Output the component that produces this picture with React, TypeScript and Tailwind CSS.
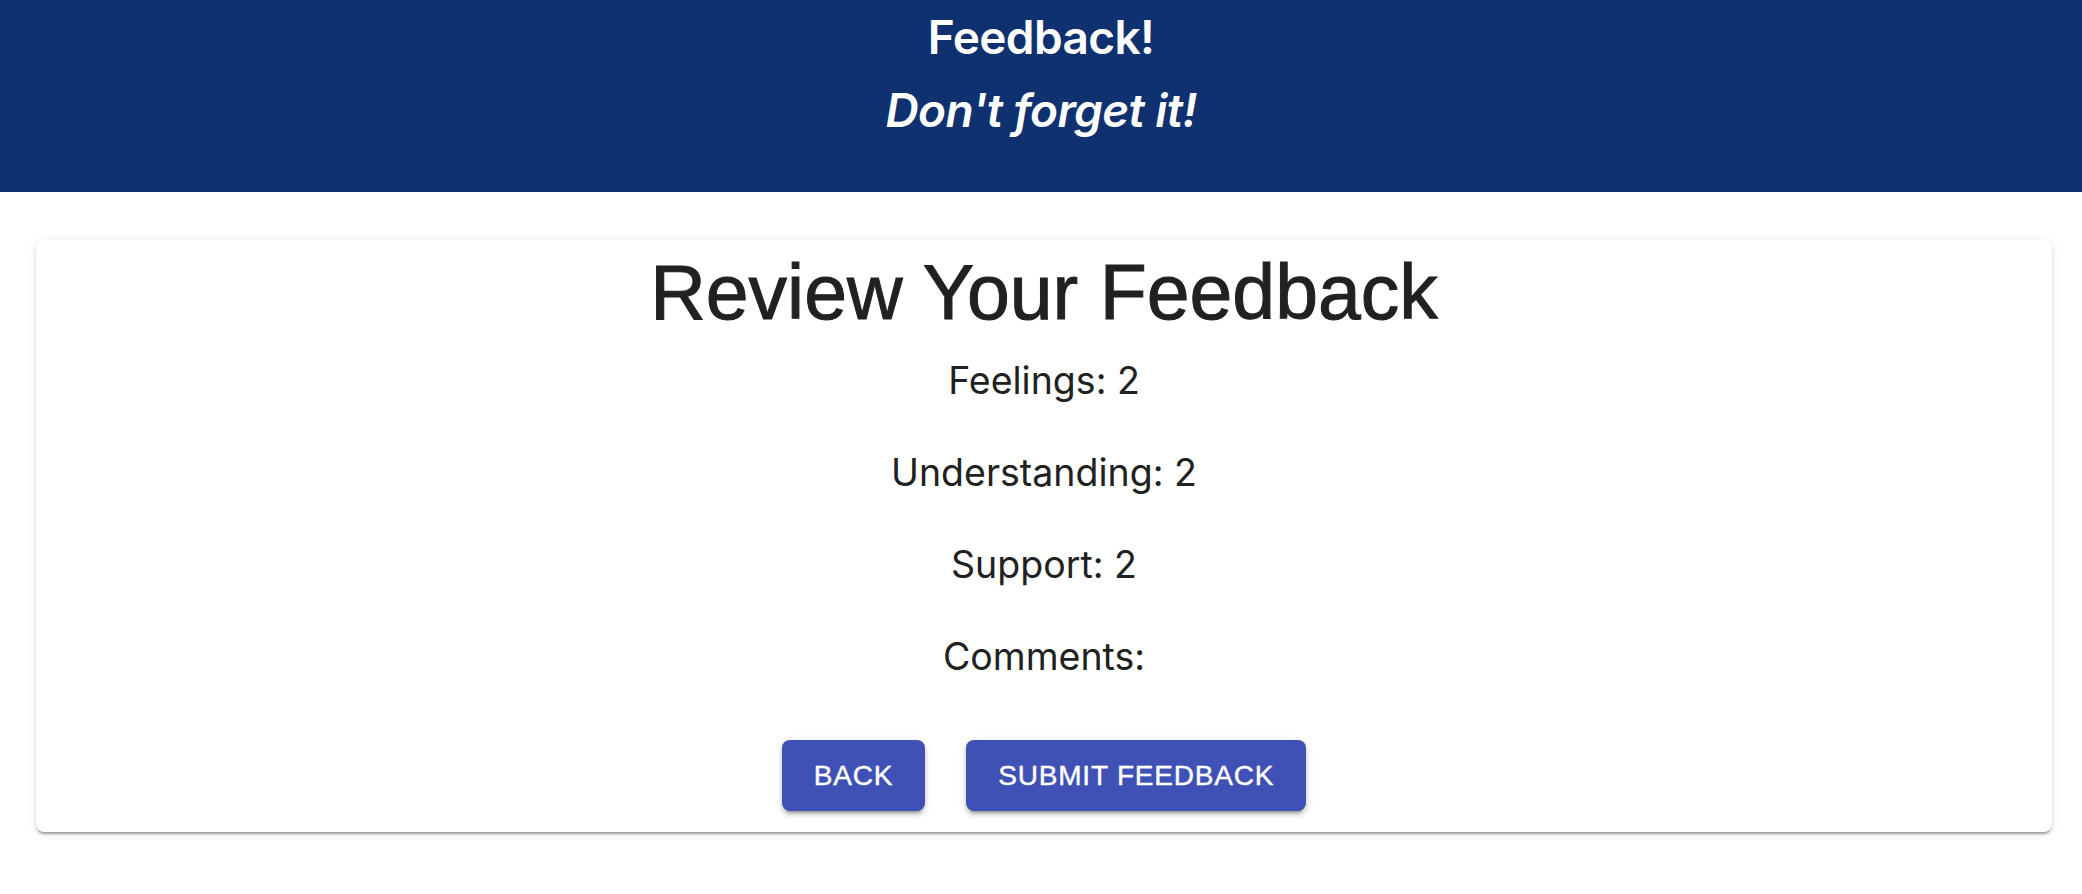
export default function App() {
  const answers = [
    { label: "Feelings", value: "2" },
    { label: "Understanding", value: "2" },
    { label: "Support", value: "2" },
    { label: "Comments", value: "" },
  ];

  return (
    <div className="min-h-screen bg-white">
      <header className="h-[192px] bg-[#10316f] pt-[9px] text-center text-white font-['Inter',sans-serif] font-semibold tracking-[-0.6px]">
        <h1 className="text-[46px] leading-[56px]">Feedback!</h1>
        <h4 className="mt-[17px] text-[46px] leading-[56px] italic">
          Don't forget it!
        </h4>
      </header>

      <main className="pl-[36px] pr-[30px] pt-[48px]">
        <div className="rounded-[8px] bg-white pt-[9px] pb-[21px] text-center shadow-[0_4px_2px_-2px_rgba(0,0,0,0.2),0_2px_2px_0_rgba(0,0,0,0.14),0_2px_8px_0_rgba(0,0,0,0.12)]">
          <h2 className="text-[77px] leading-[86px] text-[#212121] font-['Liberation_Sans',Arial,sans-serif] [-webkit-text-stroke:1px_#212121]">
            Review Your Feedback
          </h2>

          <div className="mt-[19px] flex flex-col gap-[38px] font-['Inter',sans-serif] text-[37.5px] leading-[54px] text-[#212121]">
            {answers.map((a) => (
              <p key={a.label}>
                {a.label}: {a.value}
              </p>
            ))}
          </div>

          <div className="mt-[56px] flex justify-center gap-[41px] font-['Liberation_Sans',Arial,sans-serif]">
            <button
              type="button"
              className="rounded-[8px] bg-[#3f51b5] px-[32px] py-[12px] text-[28px] leading-[47px] tracking-[0.8px] text-white [-webkit-text-stroke:0.4px_#fff] shadow-[0_6px_2px_-4px_rgba(0,0,0,0.2),0_4px_4px_0_rgba(0,0,0,0.14),0_2px_10px_0_rgba(0,0,0,0.12)]"
            >
              BACK
            </button>
            <button
              type="button"
              className="rounded-[8px] bg-[#3f51b5] px-[32px] py-[12px] text-[28px] leading-[47px] tracking-[0.8px] text-white [-webkit-text-stroke:0.4px_#fff] shadow-[0_6px_2px_-4px_rgba(0,0,0,0.2),0_4px_4px_0_rgba(0,0,0,0.14),0_2px_10px_0_rgba(0,0,0,0.12)]"
            >
              SUBMIT FEEDBACK
            </button>
          </div>
        </div>
      </main>
    </div>
  );
}
